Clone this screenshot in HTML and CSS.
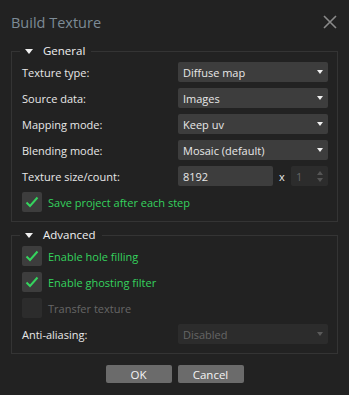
FILE: index.html
```html
<!DOCTYPE html>
<html lang="en">
<head>
    <meta charset="UTF-8">
    <title>Build Texture</title>
    <link rel="stylesheet" href="styles.css">
</head>
<body>
    <div class="dialog">
        <div class="titlebar">
            <span class="title">Build Texture</span>
            <svg class="close" width="14" height="14" viewBox="0 0 14 14">
                <path d="M1 1 L13 13 M13 1 L1 13" stroke="#8a8a8a" stroke-width="1.6"/>
            </svg>
        </div>

        <fieldset class="group">
            <legend><span class="caret"></span>General</legend>
            <div class="row">
                <label>Texture type:</label>
                <div class="select">Diffuse map<span class="arrow"></span></div>
            </div>
            <div class="row">
                <label>Source data:</label>
                <div class="select">Images<span class="arrow"></span></div>
            </div>
            <div class="row">
                <label>Mapping mode:</label>
                <div class="select">Keep uv<span class="arrow"></span></div>
            </div>
            <div class="row">
                <label>Blending mode:</label>
                <div class="select">Mosaic (default)<span class="arrow"></span></div>
            </div>
            <div class="row">
                <label>Texture size/count:</label>
                <div class="size">
                    <div class="input">8192</div>
                    <span class="times">x</span>
                    <div class="spin">1
                        <span class="spin-arrows">
                            <span class="up"></span>
                            <span class="down"></span>
                        </span>
                    </div>
                </div>
            </div>
            <div class="check-row">
                <span class="check on"><svg width="14" height="12" viewBox="0 0 14 12"><path d="M1.5 6.5 L5 10 L12.5 1.5" fill="none" stroke="#35d35e" stroke-width="2"/></svg></span>
                <span class="check-label">Save project after each step</span>
            </div>
        </fieldset>

        <fieldset class="group">
            <legend><span class="caret"></span>Advanced</legend>
            <div class="check-row">
                <span class="check on"><svg width="14" height="12" viewBox="0 0 14 12"><path d="M1.5 6.5 L5 10 L12.5 1.5" fill="none" stroke="#35d35e" stroke-width="2"/></svg></span>
                <span class="check-label">Enable hole filling</span>
            </div>
            <div class="check-row">
                <span class="check on"><svg width="14" height="12" viewBox="0 0 14 12"><path d="M1.5 6.5 L5 10 L12.5 1.5" fill="none" stroke="#35d35e" stroke-width="2"/></svg></span>
                <span class="check-label">Enable ghosting filter</span>
            </div>
            <div class="check-row">
                <span class="check off"></span>
                <span class="check-label disabled">Transfer texture</span>
            </div>
            <div class="row">
                <label>Anti-aliasing:</label>
                <div class="select disabled">Disabled<span class="arrow"></span></div>
            </div>
        </fieldset>

        <div class="buttons">
            <button class="btn">OK</button>
            <button class="btn">Cancel</button>
        </div>
    </div>
</body>
</html>
```

FILE: styles.css
```css
* {
    margin: 0;
    padding: 0;
    box-sizing: border-box;
}

body {
    background: #222222;
    font-family: 'Open Sans', 'Noto Sans', sans-serif;
    font-size: 11px;
    color: #e8e8e8;
}

.dialog {
    width: 349px;
    height: 395px;
    padding: 0 11px;
}

.titlebar {
    height: 44px;
    display: flex;
    align-items: center;
    justify-content: space-between;
}

.title {
    font-size: 14.5px;
    color: #7d8b96;
}

.close {
    margin-right: 1px;
}

.group {
    border: 1px solid #343434;
    padding: 4px 9px 9px 10px;
    margin-bottom: 6px;
}

.group legend {
    margin-left: -2px;
    padding: 0 6px 0 5px;
    line-height: 14px;
    font-size: 11.5px;
    color: #f0f0f0;
    display: flex;
    align-items: center;
}

.caret {
    width: 0;
    height: 0;
    border-left: 4px solid transparent;
    border-right: 4px solid transparent;
    border-top: 5px solid #f0f0f0;
    margin-right: 10px;
}

.row {
    display: grid;
    grid-template-columns: 1fr 150px;
    align-items: center;
    height: 20px;
    margin-bottom: 6px;
}

.row label {
    color: #e8e8e8;
}

.select {
    height: 20px;
    background: #3d3d3d;
    border-radius: 2px;
    padding-left: 5px;
    display: flex;
    align-items: center;
    justify-content: space-between;
}

.select.disabled {
    background: #2c2c2c;
    color: #666666;
}

.arrow {
    width: 0;
    height: 0;
    border-left: 3.5px solid transparent;
    border-right: 3.5px solid transparent;
    border-top: 4px solid #f0f0f0;
    margin-right: 5px;
}

.select.disabled .arrow {
    border-top-color: #5a5a5a;
}

.size {
    display: flex;
    align-items: center;
    height: 20px;
}

.input {
    width: 95px;
    height: 20px;
    background: #3d3d3d;
    border-radius: 2px;
    padding-left: 5px;
    display: flex;
    align-items: center;
}

.times {
    width: 18px;
    text-align: center;
}

.spin {
    flex: 1;
    height: 20px;
    background: #2c2c2c;
    border-radius: 2px;
    padding-left: 5px;
    color: #666666;
    display: flex;
    align-items: center;
    justify-content: space-between;
}

.spin-arrows {
    display: flex;
    flex-direction: column;
    gap: 3px;
    margin-right: 5px;
}

.spin-arrows .up {
    border-left: 3.5px solid transparent;
    border-right: 3.5px solid transparent;
    border-bottom: 4px solid #555555;
}

.spin-arrows .down {
    border-left: 3.5px solid transparent;
    border-right: 3.5px solid transparent;
    border-top: 4px solid #555555;
}

.check-row {
    display: flex;
    align-items: center;
    height: 20px;
    gap: 6px;
    margin-bottom: 6px;
}

.group .check-row:last-child,
.group .row:last-child {
    margin-bottom: 0;
}

.check {
    width: 20px;
    height: 20px;
    border-radius: 2px;
    display: flex;
    align-items: center;
    justify-content: center;
}

.check.on {
    background: #3d3d3d;
}

.check.off {
    background: #2c2c2c;
}

.check-label {
    color: #35d35e;
}

.check-label.disabled {
    color: #666666;
}

.buttons {
    display: flex;
    justify-content: center;
    gap: 6px;
    margin-top: 11px;
}

.btn {
    width: 66px;
    height: 18px;
    background: #6b6b6b;
    border: none;
    border-radius: 2px;
    color: #f4f4f4;
    font-family: inherit;
    font-size: 11.5px;
}
```
